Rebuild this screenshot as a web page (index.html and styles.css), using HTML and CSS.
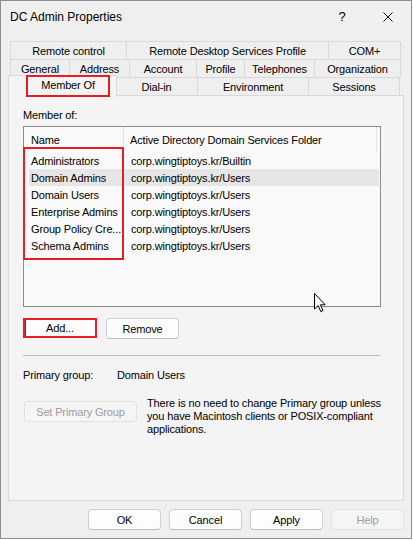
FILE: index.html
```html
<!DOCTYPE html>
<html>
<head>
<meta charset="utf-8">
<link rel="stylesheet" href="styles.css">
</head>
<body>
<div class="window">
  <div class="titlebar">
    <span class="title">DC Admin Properties</span>
    <span class="tb-btn help">?</span>
    <span class="tb-btn close"><svg width="10" height="10" viewBox="0 0 10 10"><path d="M0.5 0.5 L9.5 9.5 M9.5 0.5 L0.5 9.5" stroke="#111" stroke-width="1" fill="none"/></svg></span>
  </div>

  <div class="tabs">
    <div class="tabrow">
      <div class="tab t-rc">Remote control</div>
      <div class="tab t-rds">Remote Desktop Services Profile</div>
      <div class="tab t-com">COM+</div>
    </div>
    <div class="tabrow">
      <div class="tab t-gen">General</div>
      <div class="tab t-addr">Address</div>
      <div class="tab t-acc">Account</div>
      <div class="tab t-prof">Profile</div>
      <div class="tab t-tel">Telephones</div>
      <div class="tab t-org">Organization</div>
    </div>
    <div class="tabrow last">
      <div class="tab selected t-mem"><span class="tab-mark">Member Of</span></div>
      <div class="tab t-dial">Dial-in</div>
      <div class="tab t-env">Environment</div>
      <div class="tab t-ses">Sessions</div>
    </div>
  </div>

  <div class="panel">
    <div class="label">Member of:</div>
    <div class="listview">
      <div class="lv-header">
        <div class="hcell h1">Name</div>
        <div class="hcell h2">Active Directory Domain Services Folder</div>
      </div>
      <div class="lv-row"><span class="c1">Administrators</span><span class="c2">corp.wingtiptoys.kr/Builtin</span></div>
      <div class="lv-row sel"><span class="c1">Domain Admins</span><span class="c2">corp.wingtiptoys.kr/Users</span></div>
      <div class="lv-row"><span class="c1">Domain Users</span><span class="c2">corp.wingtiptoys.kr/Users</span></div>
      <div class="lv-row"><span class="c1">Enterprise Admins</span><span class="c2">corp.wingtiptoys.kr/Users</span></div>
      <div class="lv-row"><span class="c1">Group Policy Cre...</span><span class="c2">corp.wingtiptoys.kr/Users</span></div>
      <div class="lv-row"><span class="c1">Schema Admins</span><span class="c2">corp.wingtiptoys.kr/Users</span></div>
      <div class="names-mark"></div>
    </div>

    <div class="btnrow">
      <div class="btn add">Add...</div>
      <div class="btn">Remove</div>
    </div>

    <div class="sep"></div>

    <div class="primary">
      <span class="plabel">Primary group:</span>
      <span>Domain Users</span>
    </div>

    <div class="setrow">
      <div class="btn disabled setbtn">Set Primary Group</div>
      <div class="note">There is no need to change Primary group unless<br>you have Macintosh clients or POSIX-compliant<br>applications.</div>
    </div>
  </div>

  <div class="footer">
    <div class="btn fbtn">OK</div>
    <div class="btn fbtn">Cancel</div>
    <div class="btn fbtn">Apply</div>
    <div class="btn fbtn disabled">Help</div>
  </div>

  <svg class="cursor" width="13" height="20" viewBox="0 0 13 20">
    <path d="M0.5 0.5 L0.5 16 L4.2 12.6 L6.8 18.6 L9 17.6 L6.4 11.8 L11.2 11.8 Z" fill="#fff" stroke="#000" stroke-width="1" stroke-linejoin="miter"/>
  </svg>
</div>
</body>
</html>
```

FILE: styles.css
```css
html, body {
  margin: 0;
  padding: 0;
  background: #ffffff;
}

body {
  font-family: "Liberation Sans", Arial, sans-serif;
  font-size: 11px;
  letter-spacing: -0.15px;
  color: #000;
}

.window {
  position: relative;
  width: 412px;
  height: 539px;
  box-sizing: border-box;
  border: 1px solid #8e8e8e;
  background: #efefef;
  display: flex;
  flex-direction: column;
}

.titlebar {
  height: 31px;
  display: flex;
  align-items: center;
  padding-left: 9px;
  font-size: 12px;
  letter-spacing: 0;
}

.title {
  flex: 1;
}

.tb-btn {
  width: 46px;
  height: 31px;
  display: flex;
  align-items: center;
  justify-content: center;
}

.help {
  font-size: 13px;
}

.close svg {
  display: block;
}

/* Tabs */
.tabs {
  margin-top: 9px;
  margin-left: 9px;
  display: flex;
  flex-direction: column;
}

.tabrow {
  display: flex;
  height: 18px;
}

.tabrow.last {
  align-items: flex-end;
}

.tab {
  box-sizing: border-box;
  height: 18px;
  border: 1px solid #d9d9d9;
  border-bottom: 0;
  background: #efefef;
  display: flex;
  align-items: center;
  justify-content: center;
  white-space: nowrap;
  margin-left: -1px;
}

.tab:first-child {
  margin-left: 0;
}

.t-rc { width: 117px; }
.t-rds { width: 203px; }
.t-com { width: 73px; }

.t-gen { width: 60px; }
.t-addr { width: 61px; }
.t-acc { width: 68px; }
.t-prof { width: 49px; }
.t-tel { width: 71px; }
.t-org { width: 87px; }

.t-mem { width: 109px; }
.t-dial { width: 83px; }
.t-env { width: 112px; }
.t-ses { width: 92px; }

.tab.selected {
  position: relative;
  z-index: 1;
  height: 22px;
  margin-left: -2px;
  margin-bottom: -2px;
  background: #f4f4f4;
  align-items: flex-start;
  justify-content: flex-start;
}

.tab.selected + .tab {
  margin-left: -2px;
}

.tab-mark {
  box-sizing: border-box;
  width: 84px;
  height: 22px;
  margin-top: -1px;
  margin-left: 17px;
  border: 2px solid #e81c24;
  display: flex;
  align-items: center;
  justify-content: center;
  padding-bottom: 3px;
}

/* Panel */
.panel {
  box-sizing: border-box;
  margin-left: 7px;
  width: 396px;
  height: 406px;
  border: 1px solid #d9d9d9;
  background: #f4f4f4;
  padding: 12px 0 0 14px;
  display: flex;
  flex-direction: column;
}

.label {
  line-height: 14px;
}

.listview {
  position: relative;
  box-sizing: border-box;
  margin-top: 4px;
  width: 358px;
  height: 181px;
  border: 1px solid #8b8b8b;
  background: #f9f9f9;
}

.lv-header {
  display: flex;
  height: 25px;
  align-items: stretch;
}

.hcell {
  display: flex;
  align-items: center;
  box-sizing: border-box;
}

.h1 {
  width: 100px;
  padding-left: 7px;
  border-right: 1px solid #e3e3e3;
}

.h2 {
  width: 253px;
  padding-left: 6px;
  border-right: 1px solid #e3e3e3;
}

.lv-row {
  display: grid;
  grid-template-columns: 102px 1fr;
  height: 17px;
  align-items: center;
  margin-left: 5px;
  margin-right: 1px;
}

.lv-row .c1 {
  padding-left: 2px;
  white-space: nowrap;
}

.lv-row.sel {
  background: #e6e6e6;
}

.names-mark {
  position: absolute;
  left: -1px;
  top: 20px;
  width: 101px;
  height: 113px;
  box-sizing: border-box;
  border: 2px solid #e81c24;
}

/* Buttons */
.btn {
  box-sizing: border-box;
  height: 21px;
  width: 73px;
  border: 1px solid #d0d0d0;
  border-bottom-color: #bdbdbd;
  border-radius: 4px;
  background: #fdfdfd;
  display: flex;
  align-items: center;
  justify-content: center;
  white-space: nowrap;
}

.btn.disabled {
  color: #9d9d9d;
  background: #f5f5f5;
  border-color: #e2e2e2;
}

.btnrow {
  display: flex;
  gap: 9px;
  margin-top: 11px;
}

.btn.add {
  width: 74px;
  height: 20px;
  border: 2px solid #e81c24;
  border-radius: 0;
  box-shadow: inset 1px 0 0 #2b4f86;
}

.sep {
  margin-top: 16px;
  width: 357px;
  height: 1px;
  background: #bcbcbc;
}

.primary {
  margin-top: 12px;
  line-height: 14px;
  display: flex;
}

.plabel {
  width: 94px;
}

.setrow {
  display: flex;
  align-items: flex-start;
  margin-top: 15px;
}

.setbtn {
  width: 113px;
  margin-top: 4px;
  margin-left: 1px;
}

.note {
  margin-left: 10px;
  line-height: 13px;
  white-space: nowrap;
}

/* Footer */
.footer {
  display: flex;
  justify-content: flex-end;
  gap: 8px;
  margin-top: 8px;
  padding-right: 7px;
}

.cursor {
  position: absolute;
  left: 313px;
  top: 292px;
}
```
